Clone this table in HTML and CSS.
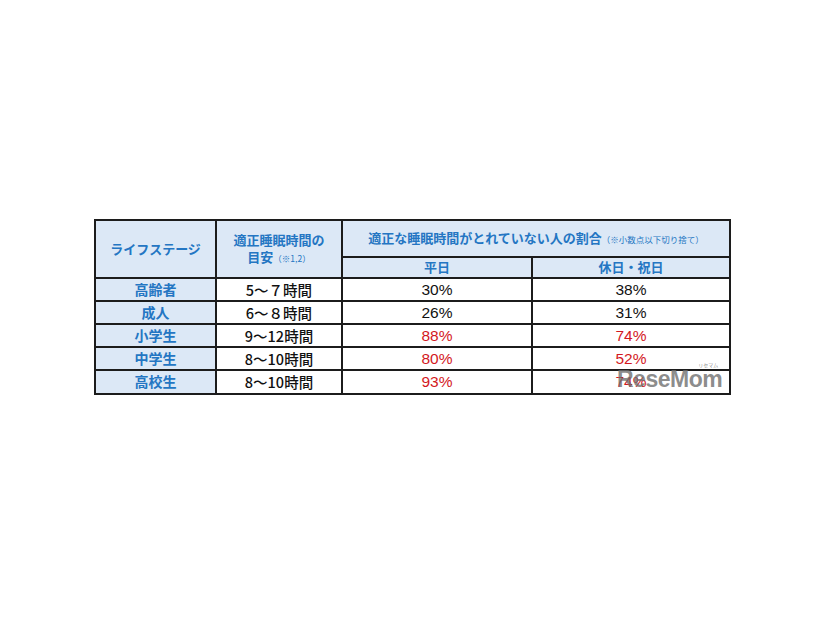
FILE: index.html
```html
<!DOCTYPE html>
<html lang="ja">
<head>
<meta charset="utf-8">
<link rel="stylesheet" href="styles.css">
</head>
<body>
<div class="page">
  <div class="wrap">
    <table class="sleep">
      <colgroup>
        <col class="c1"><col class="c2"><col class="c3"><col class="c4">
      </colgroup>
      <thead>
        <tr class="h1">
          <th rowspan="2">ライフステージ</th>
          <th rowspan="2" class="tall">適正睡眠時間の<br>目安<span class="note">（※1,2）</span></th>
          <th colspan="2">適正な睡眠時間がとれていない人の割合<span class="note">（※小数点以下切り捨て）</span></th>
        </tr>
        <tr class="h2">
          <th>平日</th>
          <th>休日・祝日</th>
        </tr>
      </thead>
      <tbody>
        <tr><th>高齢者</th><td class="hrs">5～７時間</td><td>30%</td><td>38%</td></tr>
        <tr><th>成人</th><td class="hrs">6～８時間</td><td>26%</td><td>31%</td></tr>
        <tr><th>小学生</th><td class="hrs">9～12時間</td><td class="red">88%</td><td class="red">74%</td></tr>
        <tr><th>中学生</th><td class="hrs">8～10時間</td><td class="red">80%</td><td class="red">52%</td></tr>
        <tr class="last"><th>高校生</th><td class="hrs">8～10時間</td><td class="red">93%</td><td class="red">74%</td></tr>
      </tbody>
    </table>
    <div class="mark"><span class="mark-kana">リセマム</span><span class="mark-logo">ReseMom</span></div>
  </div>
</div>
</body>
</html>
```
FILE: styles.css
```css
html, body { margin: 0; padding: 0; background: #fff; }
body { font-family: "Noto Sans CJK JP", "Liberation Sans", sans-serif; }
.page { padding: 219px 0 0 94px; }
.wrap { position: relative; width: 637px; }
.sleep {
  border-collapse: collapse;
  width: 637px;
  table-layout: fixed;
  border: 2px solid #1c1c1c;
}
.c1 { width: 121px; }
.c2 { width: 126px; }
.c3 { width: 190px; }
.c4 { width: 198px; }
.sleep th, .sleep td {
  border: 2px solid #1c1c1c;
  padding: 0;
  text-align: center;
  vertical-align: middle;
  line-height: 1.1;
}
.sleep thead th {
  background: #dce8f6;
  color: #2476c3;
  font-weight: 700;
  font-size: 13px;
}
.sleep thead th.tall { line-height: 1.3; }
.sleep .h1 th { height: 35px; }
.sleep .h2 th { height: 19px; font-size: 13px; }
.note { font-size: 8.5px; font-weight: 400; }
.sleep tbody tr { height: 23px; }
.sleep tbody tr.last { height: 24px; }
.sleep tbody th {
  background: #dce8f6;
  color: #2476c3;
  font-size: 14px;
  font-weight: 700;
}
.sleep tbody td {
  font-family: "Liberation Sans", "Noto Sans CJK JP", sans-serif;
  font-size: 15.5px;
  color: #111;
  background: #fff;
}
.sleep tbody td.hrs {
  font-family: "Noto Sans CJK JP", "Liberation Sans", sans-serif;
  font-weight: 500;
  font-size: 14.5px;
}
.sleep tbody td.red { color: #d3181e; }
.mark {
  position: absolute;
  left: 523px;
  top: 143px;
  display: flex;
  flex-direction: column;
  align-items: flex-end;
  color: rgba(110, 110, 110, 0.8);
  pointer-events: none;
}
.mark-kana { font-size: 5px; line-height: 6px; margin-right: 4px; }
.mark-logo {
  font-family: "Liberation Sans", sans-serif;
  font-weight: 700;
  font-size: 23px;
  line-height: 22px;
  letter-spacing: -0.5px;
}
```
